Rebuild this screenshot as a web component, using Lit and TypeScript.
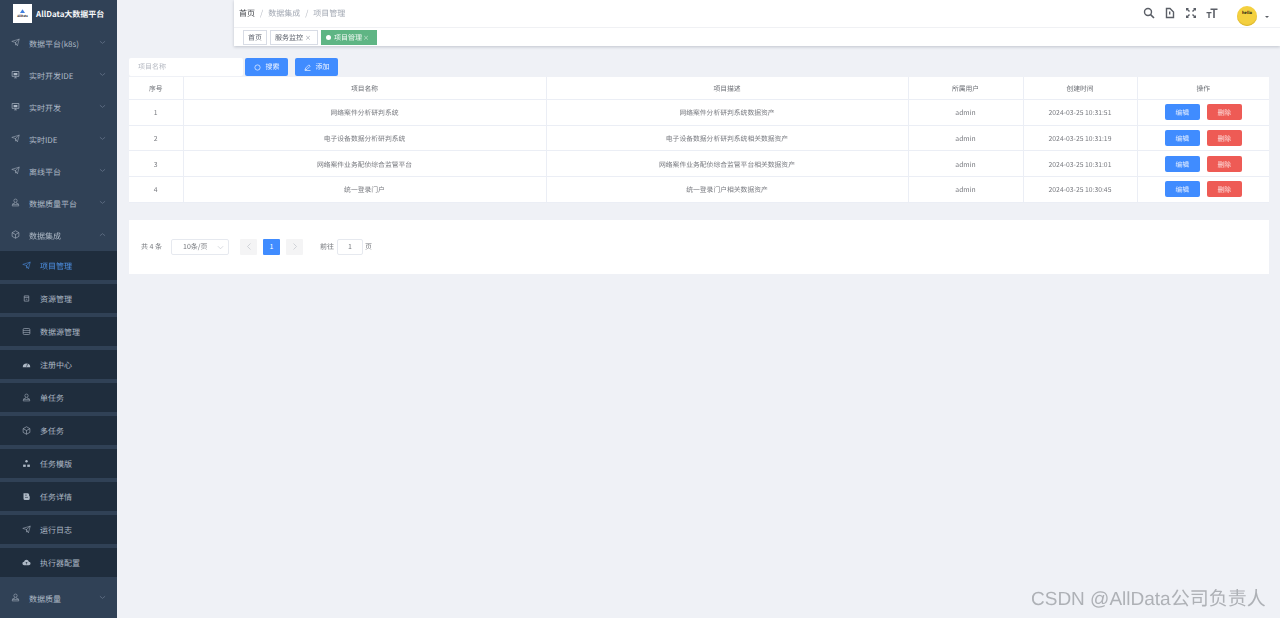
import { LitElement, html, css, svg } from "lit";
import { customElement } from "lit/decorators.js";

const icons: Record<string, any> = {
  plane: svg`<path d="M1 4.5 11 1.5 8.5 10.5 6 6 1 4.5ZM6 6 11 1.5M6 6V9.5L7.3 8.2" fill="none" stroke="currentColor" stroke-width=".7"/>`,
  monitor: svg`<path d="M1.5 2h9v6.5h-9z" fill="none" stroke="currentColor" stroke-width=".9"/><path d="M3.5 4h5v3h-5z" fill="currentColor"/><path d="M4 10.5h4M6 8.5v2" stroke="currentColor" stroke-width=".8" fill="none"/>`,
  user: svg`<circle cx="6" cy="3.6" r="2.2" fill="none" stroke="currentColor" stroke-width=".7"/><path d="M4.8 5.8 4.4 7.5H2.4L1.6 10.6h8.8L9.6 7.5H7.6L7.2 5.8M2 8.8h8" fill="none" stroke="currentColor" stroke-width=".7"/>`,
  cube: svg`<path d="M6 1 10.5 3.5V8.5L6 11 1.5 8.5V3.5ZM1.5 3.5 6 6 10.5 3.5M6 6V11" fill="none" stroke="currentColor" stroke-width=".8"/>`,
  box: svg`<path d="M3 2.5h6v7H3zM3 4.5h6M5 7h2" fill="none" stroke="currentColor" stroke-width=".8"/>`,
  db: svg`<rect x="1.5" y="2" width="9" height="8" rx="1.5" fill="none" stroke="currentColor" stroke-width=".8"/><path d="M1.5 4.7h9M1.5 7.3h9" stroke="currentColor" stroke-width=".7"/>`,
  gauge: svg`<path d="M1 9.5a5 5 0 1 1 10 0z" fill="currentColor"/><path d="M6 9 7.5 5" stroke="#1f2d3d" stroke-width=".9"/>`,
  tree: svg`<circle cx="6" cy="3" r="1.6" fill="currentColor"/><rect x="1.5" y="7.5" width="3.5" height="3" fill="currentColor"/><rect x="7" y="7.5" width="3.5" height="3" fill="currentColor"/>`,
  blog: svg`<path d="M2 1.5h5.5a2 2 0 0 1 2 2V5a2.2 2.2 0 0 1 .8 1.8v1.7a2 2 0 0 1-2 2H4a2 2 0 0 1-2-2Z" fill="currentColor"/><path d="M4 4.2h2.5M4 7.2h4" stroke="#1f2d3d" stroke-width=".8"/>`,
  cloud: svg`<path d="M3 9.5a2.3 2.3 0 0 1-.3-4.6 3.4 3.4 0 0 1 6.5 0A2.3 2.3 0 0 1 9 9.5Z" fill="currentColor"/><path d="M6 8.5V5.5M4.7 6.8 6 5.4l1.3 1.4" stroke="#1f2d3d" stroke-width=".8" fill="none"/>`,
};

const icon = (n: string) => html`<svg class="ic" viewBox="0 0 12 12">${icons[n]}</svg>`;
const chev = (up = false) =>
  html`<svg class="chev" viewBox="0 0 8 5"><path d="${up ? "M1 4 4 1.5 7 4" : "M1 1 4 3.5 7 1"}" fill="none" stroke="currentColor" stroke-width=".7"/></svg>`;

const topBefore = [
  ["plane", "数据平台(k8s)"],
  ["monitor", "实时开发IDE"],
  ["monitor", "实时开发"],
  ["plane", "实时IDE"],
  ["plane", "离线平台"],
  ["user", "数据质量平台"],
];
const subs = [
  ["plane", "项目管理"],
  ["box", "资源管理"],
  ["db", "数据源管理"],
  ["gauge", "注册中心"],
  ["user", "单任务"],
  ["cube", "多任务"],
  ["tree", "任务模版"],
  ["blog", "任务详情"],
  ["plane", "运行日志"],
  ["cloud", "执行器配置"],
];
const rows = [
  ["1", "网络案件分析研判系统", "网络案件分析研判系统数据资产", "2024-03-25 10:31:51"],
  ["2", "电子设备数据分析研判系统", "电子设备数据分析研判系统相关数据资产", "2024-03-25 10:31:19"],
  ["3", "网络案件业务配侦综合监管平台", "网络案件业务配侦综合监管平台相关数据资产", "2024-03-25 10:31:01"],
  ["4", "统一登录门户", "统一登录门户相关数据资产", "2024-03-25 10:30:45"],
];

@customElement("app-root")
export class AppRoot extends LitElement {
  static styles = css`
    :host {
      display: block;
      position: relative;
      width: 1280px;
      height: 618px;
      overflow: hidden;
      background: #eff1f6;
      font-family: "Noto Sans CJK SC", "Noto Sans", sans-serif;
      font-size: 7px;
      color: #606266;
      text-rendering: geometricPrecision;
    }
    .page { display: flex; height: 618px; filter: blur(.3px); }
    .side { width: 117px; flex: none; background: #304156; overflow: hidden; color: #aeb9c6; }
    .side span { position: relative; top: 1px; }
    .logo { height: 27px; display: flex; align-items: center; padding-left: 13px; gap: 4px; }
    .logo-img {
      width: 19px; height: 19px; background: #fff; display: flex; flex-direction: column;
      align-items: center; justify-content: center; box-sizing: border-box;
    }
    .logo-img svg { width: 5px; height: 4px; display: block; }
    .logo-img i { display: block; font-style: normal; font-weight: 700; font-size: 3px; line-height: 4px; color: #222; margin-top: 1px; white-space: nowrap; }
    .logo-t { color: #f8f9fb; font-weight: 700; font-size: 8px; white-space: nowrap; }
    .item { height: 32px; display: flex; align-items: center; padding-left: 11px; font-size: 8px; position: relative; }
    .item.last { margin-top: 1px; }
    .item .ic { width: 9px; height: 9px; margin-right: 9px; margin-top: -1px; }
    .chev { width: 7px; height: 5px; position: absolute; left: 99px; top: 13px; color: #728196; }
    .sub { height: 33px; box-sizing: border-box; border-bottom: 4px solid #304156; background: #1f2d3d;
      display: flex; align-items: center; padding-left: 22px; font-size: 8px; }
    .sub .ic { width: 9px; height: 9px; margin-right: 9px; margin-top: -1px; }
    .sub.on { color: #4f92e6; }
    .main { flex: 1; min-width: 0; display: flex; flex-direction: column; }
    .head { margin-left: 117px; height: 46px; background: #fff; box-shadow: 0 1px 3px rgba(0,21,41,.2); flex: none; }
    .nav { height: 27px; display: flex; align-items: center; border-bottom: 1px solid #f0f1f4; padding-left: 5px; font-size: 8px; color: #a2a8b3; position: relative; }
    .nav b { font-weight: 400; color: #3a3d42; }
    .nav s { text-decoration: none; color: #b5b9c2; margin: 0 5px; }
    .tools { margin-left: auto; display: flex; align-items: center; height: 27px; color: #5a5e66; }
    .tools svg { display: block; }
    .tool { width: 12px; height: 12px; margin-right: 9px; margin-top: -2px; }
    .avatar { width: 20px; height: 20px; border-radius: 50%; background: #f4d03f; margin-left: 19px; margin-top: 4px;
      box-shadow: inset 0 -1px 1px #d9b52e; display: flex; align-items: center; justify-content: center;
      font-size: 4px; font-weight: 700; color: #111; line-height: 1; padding-bottom: 6px; box-sizing: border-box; }
    .caret { width: 0; height: 0; border: 2px solid transparent; border-top: 2.5px solid #5a5e66; margin: 9px 11px 0 8px; }
    .tags { height: 18px; display: flex; align-items: center; padding-left: 9px; gap: 3px; font-size: 7px; padding-top: 0; }
    .tag { height: 15px; box-sizing: border-box; border: 1px solid #d8dce5; color: #5c616c; display: flex; align-items: center; padding: 1px 4px 0; }
    .tag u { text-decoration: none; margin: 0 2px; font-size: 6px; color: #8a8f99; }
    .tag.on { background: #5fb584; border-color: #5fb584; color: #f7fbf8; padding: 1px 7px 0 4px; }
    .tag.on em { width: 5px; height: 5px; border-radius: 50%; background: #fff; margin-right: 3px; }
    .tag.on u { color: #d5e9dc; margin: 0 0 0 1px; }
    .body { padding: 12px 11px 0 12px; }
    .bar { display: flex; height: 18px; margin-bottom: 1px; }
    .input { width: 114px; height: 18px; box-sizing: border-box; background: #fff; border-radius: 2px; color: #b4b8c1; padding-left: 9px; display: flex; align-items: center; }
    .btn { height: 18px; width: 43px; box-sizing: border-box; border-radius: 2px; background: #408cff; color: #f2f7ff; display: flex; align-items: center; justify-content: center; gap: 5px; }
    .btn svg { width: 7px; height: 7px; }
    .btn.a { margin-left: 2px; }
    .btn.b { margin-left: 7px; }
    table { width: 1140px; border-collapse: collapse; table-layout: fixed; background: #fff; text-align: center; font-size: 6.8px; }
    th, td { padding: 0; border-bottom: 1px solid #ebeef5; border-right: 1px solid #ebeef5; font-weight: 400; }
    th:last-child, td:last-child { border-right: 0; }
    th { height: 22px; color: #6c6f75; }
    td { height: 24.67px; color: #77797f; }
    .ops { display: flex; justify-content: center; gap: 7px; }
    .ops span { width: 35px; height: 16px; border-radius: 2px; display: flex; align-items: center; justify-content: center; color: #e8f0ff; background: #408cff; }
    .ops span.del { background: #ee5b55; color: #fde3e2; }
    .pager { margin-top: 17px; height: 54px; background: #fff; display: flex; align-items: center; padding-left: 12px; color: #75787d; }
    .sel { width: 58px; height: 16px; box-sizing: border-box; margin-left: 9px; border: 1px solid #e6e9ef; border-radius: 2px; display: flex; align-items: center; padding-left: 11px; position: relative; }
    .sel svg { position: absolute; left: 45px; top: 5px; width: 7px; height: 5px; color: #c0c4cc; }
    .pg { width: 17px; height: 16px; background: #f4f4f5; display: flex; align-items: center; justify-content: center; color: #c0c4cc; border-radius: 1px; }
    .pg svg { width: 4px; height: 7px; }
    .pg.cur { background: #408cff; color: #fff; margin: 0 6px; }
    .pg.first { margin-left: 11px; }
    .jump { margin-left: 17px; }
    .num { width: 26px; height: 16px; box-sizing: border-box; border: 1px solid #e6e9ef; border-radius: 2px; margin: 0 2px 0 3px; display: flex; align-items: center; justify-content: center; }
    .mark { position: absolute; left: 1031px; top: 586px; font-size: 19px; line-height: 28px; color: #aeb1b6; white-space: nowrap;
      font-family: "Liberation Sans", "Noto Sans CJK SC", sans-serif; filter: blur(.4px); }
  `;

  render() {
    return html`
      <div class="page">
        <aside class="side">
          <div class="logo">
            <div class="logo-img">
              <svg viewBox="0 0 8 6"><path d="M4 0 8 6H0Z" fill="#3f7fe0"/></svg>
              <i>AllData</i>
            </div>
            <span class="logo-t">AllData大数据平台</span>
          </div>
          ${topBefore.map(([i, t]) => html`<div class="item">${icon(i)}<span>${t}</span>${chev()}</div>`)}
          <div class="item">${icon("cube")}<span>数据集成</span>${chev(true)}</div>
          ${subs.map(([i, t], n) => html`<div class="sub ${n === 0 ? "on" : ""}">${icon(i)}<span>${t}</span></div>`)}
          <div class="item last">${icon("user")}<span>数据质量</span>${chev()}</div>
        </aside>
        <div class="main">
          <header class="head">
            <div class="nav">
              <b>首页</b><s>/</s><span>数据集成</span><s>/</s><span>项目管理</span>
              <div class="tools">
                <svg class="tool" viewBox="0 0 12 12"><circle cx="5" cy="5" r="3.5" fill="none" stroke="currentColor" stroke-width="1.4"/><path d="M7.6 7.6 11 11" stroke="currentColor" stroke-width="1.6"/></svg>
                <svg class="tool" viewBox="0 0 12 12"><path d="M2.5 1.5H6L9.5 5V10.5H2.5ZM5.7 4.5V7.5" fill="none" stroke="currentColor" stroke-width="1.4"/></svg>
                <svg class="tool" viewBox="0 0 12 12"><path d="M1 4V1H4L3 2 5 4 4 5 2 3ZM11 4V1H8L9 2 7 4 8 5 10 3ZM1 8V11H4L3 10 5 8 4 7 2 9ZM11 8V11H8L9 10 7 8 8 7 10 9Z" fill="currentColor"/></svg>
                <svg class="tool" style="margin-right:0" viewBox="0 0 12 12"><path d="M4.5 1.5H11.5V3H8.8V11H7.2V3H4.5ZM.5 5H5.5V6.2H3.7V11H2.3V6.2H.5Z" fill="currentColor"/></svg>
                <div class="avatar">hello</div>
                <div class="caret"></div>
              </div>
            </div>
            <div class="tags">
              <div class="tag">首页</div>
              <div class="tag">服务监控<u>×</u></div>
              <div class="tag on"><em></em>项目管理<u>×</u></div>
            </div>
          </header>
          <section class="body">
            <div class="bar">
              <div class="input">项目名称</div>
              <div class="btn a"><svg viewBox="0 0 8 8"><circle cx="4" cy="4" r="3" fill="none" stroke="currentColor" stroke-width=".8"/></svg>搜索</div>
              <div class="btn b"><svg viewBox="0 0 8 8"><path d="M1 7 2 4.5 5.5 1 7 2.5 3.5 6ZM1 7.5H7.5" fill="none" stroke="currentColor" stroke-width=".8"/></svg>添加</div>
            </div>
            <table>
              <colgroup>
                <col style="width:54px" /><col style="width:363px" /><col style="width:362px" />
                <col style="width:115px" /><col style="width:114px" /><col style="width:132px" />
              </colgroup>
              <thead><tr><th>序号</th><th>项目名称</th><th>项目描述</th><th>所属用户</th><th>创建时间</th><th>操作</th></tr></thead>
              <tbody>
                ${rows.map((r) => html`<tr>
                  <td>${r[0]}</td><td>${r[1]}</td><td>${r[2]}</td><td>admin</td><td>${r[3]}</td>
                  <td><div class="ops"><span>编辑</span><span class="del">删除</span></div></td>
                </tr>`)}
              </tbody>
            </table>
            <div class="pager">
              <span>共 4 条</span>
              <div class="sel">10条/页<svg viewBox="0 0 8 5"><path d="M1 1 4 4 7 1" fill="none" stroke="currentColor" stroke-width=".7"/></svg></div>
              <div class="pg first"><svg viewBox="0 0 4 7"><path d="M3.5 .5 .5 3.5 3.5 6.5" fill="none" stroke="currentColor" stroke-width=".7"/></svg></div>
              <div class="pg cur">1</div>
              <div class="pg"><svg viewBox="0 0 4 7"><path d="M.5 .5 3.5 3.5 .5 6.5" fill="none" stroke="currentColor" stroke-width=".7"/></svg></div>
              <span class="jump">前往</span><div class="num">1</div><span>页</span>
            </div>
          </section>
        </div>
      </div>
      <div class="mark">CSDN @AllData公司负责人</div>
    `;
  }
}
